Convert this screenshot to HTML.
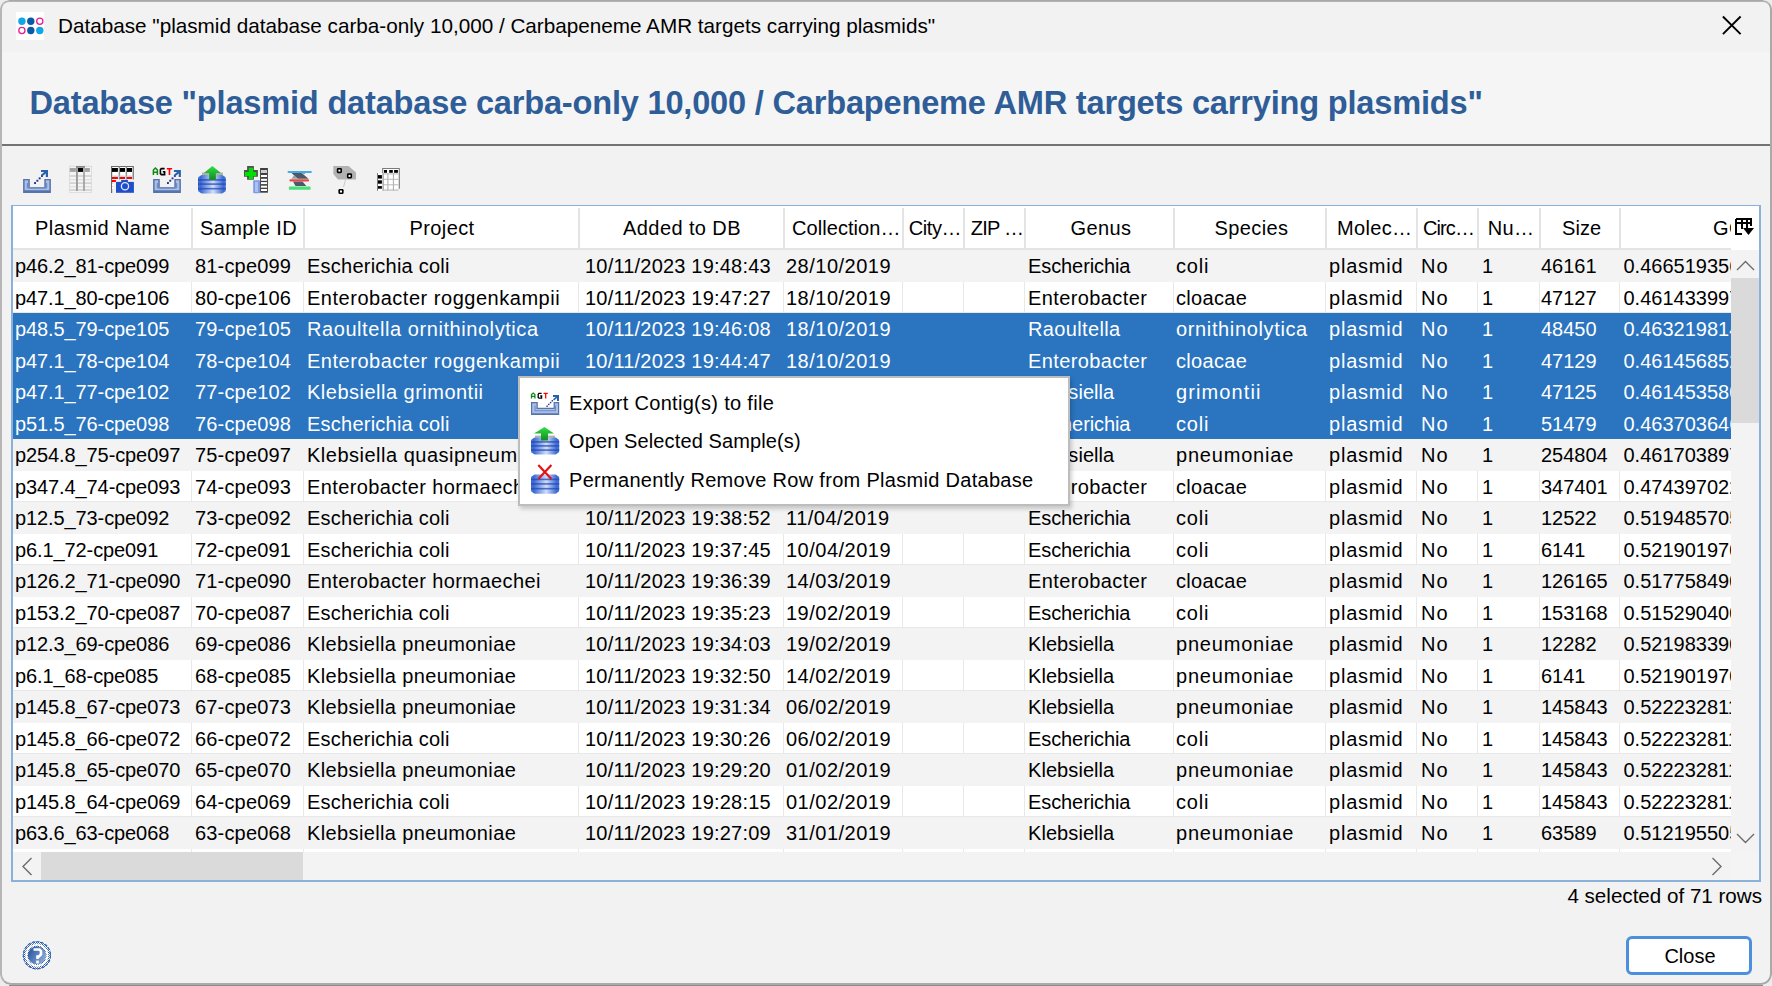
<!DOCTYPE html>
<html><head><meta charset="utf-8">
<style>
*{box-sizing:border-box}
html,body{margin:0;padding:0}
body{width:1772px;height:986px;overflow:hidden;position:relative;background:#ececec;font-family:"Liberation Sans",sans-serif;color:#000}
.win{position:absolute;left:0;top:0;width:1772px;height:985px;background:#f2f2f2;border-radius:9px 9px 11px 11px;overflow:hidden}
.frame{position:absolute;left:0;top:0;width:1772px;height:985px;border:2px solid #aaaaaa;border-left-color:#b6b6b6;border-top-color:#b4b4b4;border-top-width:2px;border-radius:9px 9px 11px 11px}
.strip{position:absolute;background:#a8a8a8}
.abs{position:absolute}
.titlebar{position:absolute;left:0;top:0;width:100%;height:52px;background:#f2f2f2}
.title{position:absolute;left:58px;top:13.5px;font-size:20.7px;line-height:24px;white-space:pre}
.heading{position:absolute;left:0;top:52px;width:100%;height:92px;background:#f5f5f5}
.heading .t{position:absolute;left:29.5px;top:32.6px;font-size:32.6px;letter-spacing:-0.2px;font-weight:bold;color:#2e5d98;line-height:36px;white-space:pre}
.sepline{position:absolute;left:0;top:144px;width:100%;height:2px;background:#737373}
.tbl{position:absolute;left:11px;top:205px;width:1750px;height:677px;border:2px solid #89b1d9;border-top-width:1px;border-bottom-width:2px;background:#fff;overflow:hidden}
.hdr{position:absolute;left:0;top:0;width:1718px;height:43px;background:#fff;overflow:hidden}
.hdr .hc{position:absolute;top:10px;height:24px;line-height:24px;font-size:20px;letter-spacing:0.4px;text-align:center;white-space:nowrap;overflow:visible}
.hdr .hs{position:absolute;top:2px;width:2px;height:40px;background:#e4e4e4}
.hline{position:absolute;left:0;top:42px;width:1718px;height:2px;background:#e4e4e4}
.body{position:absolute;left:0;top:44px;width:1718px;height:602px;overflow:hidden}
.row{position:absolute;left:0;width:1718px}
.row.g{background:#f3f3f3}
.row.w{background:#fff;border-bottom:1px solid #e8e8e8}
.row.sel{background:#2a74c0;color:#fff}
.row i{position:absolute;top:0;width:1px;height:100%;background:#e8e8e8}
.row span{position:absolute;top:4px;height:24px;line-height:24px;font-size:20px;white-space:nowrap;overflow:hidden}
.vsb{position:absolute;left:1718px;top:44px;width:28px;height:602px;background:#f3f3f3}
.hsb{position:absolute;left:0;top:646px;width:1718px;height:28px;background:#f3f3f3}
.corner{position:absolute;left:1718px;top:646px;width:28px;height:28px;background:#f4f4f4}
.status{position:absolute;right:10px;top:883.8px;font-size:20.6px;line-height:24px;white-space:pre}
.btn{position:absolute;left:1626px;top:936px;width:126px;height:39px;border:3px solid #4a90dd;border-radius:6px;background:#fff;font-size:20px;text-align:center;line-height:35px;padding-left:2px}
.menu{position:absolute;left:518px;top:376px;width:552px;height:130px;background:#fff;border:2px solid #bdbdbd;box-shadow:2px 3px 4px rgba(0,0,0,.18)}
.menu .it{position:absolute;left:49px;font-size:20px;letter-spacing:0.3px;line-height:24px;white-space:pre}
</style></head>
<body>
<div class="win">
  <div class="titlebar">
    <svg class="abs" style="left:16px;top:12px" width="28" height="28" viewBox="0 0 28 28">
      <rect x="0" y="0" width="28" height="28" fill="#fff"/>
      <circle cx="5.9" cy="9.3" r="3.7" fill="#12a6e6"/>
      <circle cx="14.8" cy="9.3" r="3.7" fill="#0a5aa6"/>
      <circle cx="23.8" cy="9.3" r="3.1" fill="none" stroke="#ea1e8c" stroke-width="1.3"/>
      <circle cx="5.9" cy="18.5" r="3.1" fill="none" stroke="#ea1e8c" stroke-width="1.3"/>
      <circle cx="14.8" cy="18.5" r="3.7" fill="#0a5aa6"/>
      <circle cx="23.8" cy="18.5" r="3.7" fill="#12a6e6"/>
    </svg>
    <div class="title">Database "plasmid database carba-only 10,000 / Carbapeneme AMR targets carrying plasmids"</div>
    <svg class="abs" style="left:1719px;top:12.8px" width="25" height="24" viewBox="0 0 25 24">
      <path d="M3.9 3.5 L21.6 21.2 M21.6 3.5 L3.9 21.2" stroke="#000" stroke-width="1.9" fill="none"/>
    </svg>
  </div>
  <div class="heading"><div class="t">Database "plasmid database carba-only 10,000 / Carbapeneme AMR targets carrying plasmids"</div></div>
  <div class="sepline"></div>

  <div id="toolbar">
  <svg class="abs" style="left:20px;top:162px" width="36" height="36"><path d="M3.1 17 H9.8 V25 H24.3 V17 H30.900000000000002 V30.9 H3.1 Z" fill="#5673ad"/>
<path d="M4.6 18.3 H8.3 V26.4 H25.8 V18.3 H29.400000000000002 V28.2 H4.6 Z" fill="#a9bfe6"/>
<path d="M7.4 21 V25.6 H26.6 V21" fill="none" stroke="#6f8cc6" stroke-width="1.2"/><rect x="14.1" y="20.1" width="1.9" height="1.9" fill="#1d2f90"/><rect x="16.4" y="17.8" width="1.9" height="1.9" fill="#1d2f90"/><rect x="18.7" y="15.4" width="1.9" height="1.9" fill="#1d2f90"/><rect x="21.0" y="13.0" width="1.9" height="1.9" fill="#1d2f90"/><path d="M21 8 H28 V15 L25.8 15 V11.5 L22 14.5 L20.8 13 L24.2 10 H21 Z" fill="#2a62a8"/></svg>
<svg class="abs" style="left:62px;top:162px" width="36" height="36"><rect x="7.1" y="3.8" width="22.8" height="27" fill="#d4d4d4"/><rect x="7.8" y="4.6" width="21.4" height="25.6" fill="#f4f4f4"/><rect x="7.8" y="6" width="6.1" height="3.9" fill="#a3a3a3"/><rect x="16" y="6" width="5" height="3.9" fill="#000"/><rect x="23" y="6" width="4.9" height="3.9" fill="#a3a3a3"/><rect x="7.8" y="13.2" width="21.4" height="1.6" fill="#d0d0d0"/><rect x="7.8" y="20.3" width="21.4" height="1.6" fill="#d0d0d0"/><rect x="7.8" y="27.2" width="21.4" height="1.6" fill="#d0d0d0"/><rect x="7.8" y="17.1" width="21.4" height="1.2" fill="#dedede"/><rect x="7.8" y="24.1" width="21.4" height="1.2" fill="#dedede"/><rect x="14" y="4" width="1.9" height="25" fill="#9c9c9c"/><rect x="21.2" y="4" width="1.6" height="25" fill="#9c9c9c"/><rect x="14" y="4" width="8.8" height="1.8" fill="#8a8a8a"/></svg>
<svg class="abs" style="left:106px;top:162px" width="36" height="36"><rect x="5.1" y="4" width="22.6" height="13.5" fill="#fff"/><path d="M5.6 31 V4.5 H27.2 V17.5" fill="none" stroke="#6a6a6a" stroke-width="1.2"/><rect x="12.7" y="4.5" width="1.4" height="13" fill="#8a8a8a"/><rect x="19.7" y="4.5" width="1.4" height="13" fill="#8a8a8a"/><rect x="6" y="6" width="5.9" height="3.9" fill="#000"/><rect x="14" y="6" width="5" height="3.9" fill="#000"/><rect x="21" y="6" width="5" height="3.9" fill="#000"/><rect x="6" y="13.6" width="21" height="1.2" fill="#b8d0d0"/><rect x="6" y="15" width="5.9" height="2" fill="#f00"/><rect x="14" y="15" width="5" height="2" fill="#f00"/><rect x="21" y="15" width="5" height="2" fill="#f00"/><rect x="6" y="18" width="3.9" height="2" fill="#f00"/><rect x="6" y="22" width="2" height="2" fill="#fff"/><rect x="6" y="25" width="2" height="2" fill="#fff"/><rect x="10" y="19.9" width="17.9" height="10.9" fill="#1f4fc8"/><rect x="15.2" y="17.9" width="6.7" height="2.2" fill="#1f4fc8"/><circle cx="19" cy="24.3" r="3.6" fill="none" stroke="#dfe6f8" stroke-width="1.3"/></svg>
<svg class="abs" style="left:148px;top:162px" width="36" height="36"><path d="M5.1 17 H11.8 V25 H26.299999999999997 V17 H32.9 V30.9 H5.1 Z" fill="#5673ad"/>
<path d="M6.6 18.3 H10.3 V26.4 H27.799999999999997 V18.3 H31.4 V28.2 H6.6 Z" fill="#a9bfe6"/>
<path d="M9.399999999999999 21 V25.6 H28.6 V21" fill="none" stroke="#6f8cc6" stroke-width="1.2"/><rect x="19.0" y="20.1" width="1.9" height="1.9" fill="#1d2f90"/><rect x="21.3" y="17.8" width="1.9" height="1.9" fill="#1d2f90"/><rect x="23.6" y="15.4" width="1.9" height="1.9" fill="#1d2f90"/><rect x="25.9" y="13.0" width="1.9" height="1.9" fill="#1d2f90"/><path d="M25.9 8 H32.9 V15 L30.7 15 V11.5 L26.9 14.5 L25.7 13 L29.099999999999998 10 H25.9 Z" fill="#2a62a8"/><path d="M5.4 13 V8 L7.4 6 L9.4 8 V13 M5.4 10.2 H9.4" fill="none" stroke="#0e8a0e" stroke-width="1.5"/><path d="M16.6 6.6 H13.3 L12.4 7.6 V11.6 L13.3 12.6 H16.6 V9.8 H14.8" fill="none" stroke="#000" stroke-width="1.6"/><path d="M18.8 6.7 H24.1 M21.45 6.7 V13" fill="none" stroke="#f00" stroke-width="1.6"/></svg>
<svg class="abs" style="left:194px;top:162px" width="36" height="36"><defs>
<linearGradient id="dbg" x1="0" y1="0" x2="1" y2="0"><stop offset="0" stop-color="#3564d0"/><stop offset="0.55" stop-color="#d0def8"/><stop offset="1" stop-color="#3564d0"/></linearGradient>
<linearGradient id="grn" x1="0" y1="0" x2="0" y2="1"><stop offset="0" stop-color="#2fe045"/><stop offset="1" stop-color="#138a22"/></linearGradient>
</defs><rect x="8" y="10.6" width="21" height="2.4" fill="#a7b7a0"/><rect x="4" y="14.1" width="27.8" height="16.3" rx="3" fill="url(#dbg)"/><rect x="6" y="13.1" width="23.8" height="18.3" rx="2" fill="url(#dbg)"/><rect x="4" y="17.1" width="27.8" height="1.6" fill="#2448b8" opacity="0.75"/><rect x="4" y="21.3" width="27.8" height="1.6" fill="#2448b8" opacity="0.75"/><rect x="4" y="25.9" width="27.8" height="1.6" fill="#2448b8" opacity="0.75"/><path d="M18.3 4 L27 11 H21.9 V17.7 H15.2 V11 H9.9 Z" fill="url(#grn)"/></svg>
<svg class="abs" style="left:238px;top:162px" width="36" height="36"><rect x="15.2" y="18.3" width="7" height="13" rx="1" fill="#7d9ce6"/><rect x="17" y="20" width="3" height="10" fill="#b9cbf4" opacity=".8"/><path d="M9.1 4 H15.9 V8 H19.9 V14.8 H15.9 V17.7 H9.1 V14.8 H6 V8 H9.1 Z" fill="#505050"/><path d="M10.8 5.8 H15.2 V9.9 H18.3 V14 H15.2 V17.2 H10.8 V14 H6.9 V9.9 H10.8 Z" fill="#00e000"/><rect x="22.1" y="6" width="7.8" height="24.7" fill="#3f3f3f"/><rect x="23" y="8" width="6" height="3" fill="#cdcdcd"/><rect x="23" y="13" width="6" height="2" fill="#fff"/><rect x="23" y="16.8" width="6" height="2" fill="#fff"/><rect x="23" y="20.1" width="6" height="2" fill="#fff"/><rect x="23" y="23.7" width="6" height="2" fill="#fff"/><rect x="23" y="27" width="6" height="2" fill="#fff"/></svg>
<svg class="abs" style="left:282px;top:162px" width="36" height="36"><path d="M9.5 11 H19.7 L26.5 16.8 H15.7 Z" fill="#4b5a66"/><path d="M19.7 11 H23.8 L22 12.5 Z M9.5 16.8 L12 13.5 L15.7 16.8 Z" fill="#8ea2ad"/><path d="M11 19.6 H20.5 L24.3 24 H13.5 Z" fill="#4b5a66"/><rect x="5.5" y="9.1" width="24.4" height="2" rx="1" fill="#45aae8"/><rect x="7.5" y="17.2" width="19.5" height="2.3" rx="0.8" fill="#e84848"/><rect x="6.9" y="24.5" width="21.6" height="3.2" rx="0.5" fill="#4ade7a"/></svg>
<svg class="abs" style="left:326px;top:162px" width="36" height="36"><path d="M7.3 4 H22.6 L30 10.5 V17.6 H12 L7.3 12 Z" fill="#b2b2b2"/><path d="M19.5 18 L17.5 25" stroke="#c8c8c8" stroke-width="1"/><rect x="10.8" y="6.0" width="5.2" height="5.2" rx="1.4" fill="#000"/><rect x="12.4" y="7.6" width="2" height="2" fill="#fff"/><rect x="20.9" y="11.3" width="5.2" height="5.2" rx="1.4" fill="#000"/><rect x="22.5" y="12.9" width="2" height="2" fill="#fff"/><rect x="12.4" y="26.9" width="5.2" height="5.2" rx="1.4" fill="#000"/><rect x="14" y="28.5" width="2" height="2" fill="#fff"/></svg>
<svg class="abs" style="left:370px;top:162px" width="36" height="36"><rect x="12.2" y="6" width="17.6" height="20.7" fill="#fff"/><path d="M12.7 11 V6.5 H29.3 V26.7" fill="none" stroke="#7a7a7a" stroke-width="1.1"/><rect x="14" y="8" width="3" height="2.8" fill="#000"/><rect x="19.2" y="8" width="3.6" height="2.8" fill="#000"/><rect x="24.1" y="8" width="3.8" height="2.8" fill="#000"/><rect x="7.1" y="11" width="6.6" height="17.8" fill="#fff"/><path d="M7.5 11 V28.8" stroke="#6a6a6a" stroke-width="0.9"/><path d="M13.1 11 V28.8" stroke="#8a8a8a" stroke-width="1.1"/><rect x="8" y="13.1" width="3.9" height="3.5" fill="#000"/><rect x="8" y="18.3" width="3.9" height="3.4" fill="#000"/><rect x="8" y="24.1" width="3.9" height="2.6" fill="#000"/><rect x="17.4" y="11" width="1" height="17.5" fill="#a8a8a8"/><rect x="22.9" y="11" width="1" height="17.5" fill="#a8a8a8"/><rect x="13" y="11.4" width="15.5" height="1" fill="#b8b8b8"/><rect x="13" y="16.8" width="15.5" height="1" fill="#b8b8b8"/><rect x="13" y="22.3" width="15.5" height="1" fill="#b8b8b8"/><rect x="13" y="27.6" width="15.5" height="1" fill="#b8b8b8"/></svg>
  </div>

  <div class="tbl">
    <div class="hdr">
<div class="hc" style="left:0px;width:179px">Plasmid Name</div>
<div class="hc" style="left:180px;width:111px">Sample ID</div>
<div class="hc" style="left:292px;width:274px">Project</div>
<div class="hc" style="left:567px;width:204px">Added to DB</div>
<div class="hc" style="left:774.25px;width:118px;letter-spacing:0.05px">Collection…</div>
<div class="hc" style="left:892px;width:60px;letter-spacing:-0.4px">City…</div>
<div class="hc" style="left:954px;width:60px;letter-spacing:-0.8px">ZIP …</div>
<div class="hc" style="left:1014px;width:148px">Genus</div>
<div class="hc" style="left:1163px;width:151px">Species</div>
<div class="hc" style="left:1316.7px;width:90px;letter-spacing:0.3px">Molec…</div>
<div class="hc" style="left:1405.5px;width:60px;letter-spacing:-0.9px">Circ…</div>
<div class="hc" style="left:1467.6px;width:61px;letter-spacing:0.3px">Nu…</div>
<div class="hc" style="left:1529.1px;width:79px;letter-spacing:0.1px">Size</div>
<div class="hc" style="left:1613px;width:205px">GC</div>
<div class="hs" style="left:178px"></div>
<div class="hs" style="left:290px"></div>
<div class="hs" style="left:565px"></div>
<div class="hs" style="left:770px"></div>
<div class="hs" style="left:889px"></div>
<div class="hs" style="left:950px"></div>
<div class="hs" style="left:1011px"></div>
<div class="hs" style="left:1160px"></div>
<div class="hs" style="left:1312px"></div>
<div class="hs" style="left:1403px"></div>
<div class="hs" style="left:1464px"></div>
<div class="hs" style="left:1526px"></div>
<div class="hs" style="left:1606px"></div>
    </div>
    <div class="hline"></div>
    <svg class="abs" style="left:1722px;top:12px" width="19" height="18" viewBox="0 0 19 18">
      <path d="M1 1 H16 V8 M1 1 V16 H7 M1 5 H16 M7 1 V11 M12 1 V11" stroke="#000" stroke-width="2" fill="none"/>
      <path d="M8 10 H19 L13.5 17 Z" fill="#000"/>
    </svg>
    <div class="body">
<div class="row g" style="top:0px;height:32px">
<span style="left:2px;width:177px;letter-spacing:-0.1px">p46.2_81-cpe099</span>
<span style="left:182px;width:109px;letter-spacing:0.17px">81-cpe099</span>
<span style="left:294px;width:272px;letter-spacing:0.23px">Escherichia coli</span>
<span style="left:572px;width:199px;letter-spacing:0.2px">10/11/2023 19:48:43</span>
<span style="left:773px;width:117px;letter-spacing:0.5px">28/10/2019</span>
<span style="left:1015px;width:146px;letter-spacing:-0.09px">Escherichia</span>
<span style="left:1163px;width:150px;letter-spacing:0.83px">coli</span>
<span style="left:1316px;width:88px;letter-spacing:0.78px">plasmid</span>
<span style="left:1408px;width:57px;letter-spacing:1.0px">No</span>
<span style="left:1469px;width:58px">1</span>
<span style="left:1528px;width:79px">46161</span>
<span style="left:1610.5px;width:276.5px">0.466519356</span>
</div>
<div class="row w" style="top:32px;height:31px">
<i style="left:178px"></i>
<i style="left:290px"></i>
<i style="left:565px"></i>
<i style="left:770px"></i>
<i style="left:889px"></i>
<i style="left:950px"></i>
<i style="left:1011px"></i>
<i style="left:1160px"></i>
<i style="left:1312px"></i>
<i style="left:1403px"></i>
<i style="left:1464px"></i>
<i style="left:1526px"></i>
<i style="left:1606px"></i>
<span style="left:2px;width:177px;letter-spacing:-0.1px">p47.1_80-cpe106</span>
<span style="left:182px;width:109px;letter-spacing:0.17px">80-cpe106</span>
<span style="left:294px;width:272px;letter-spacing:0.52px">Enterobacter roggenkampii</span>
<span style="left:572px;width:199px;letter-spacing:0.2px">10/11/2023 19:47:27</span>
<span style="left:773px;width:117px;letter-spacing:0.5px">18/10/2019</span>
<span style="left:1015px;width:146px;letter-spacing:0.39px">Enterobacter</span>
<span style="left:1163px;width:150px;letter-spacing:0.32px">cloacae</span>
<span style="left:1316px;width:88px;letter-spacing:0.78px">plasmid</span>
<span style="left:1408px;width:57px;letter-spacing:1.0px">No</span>
<span style="left:1469px;width:58px">1</span>
<span style="left:1528px;width:79px">47127</span>
<span style="left:1610.5px;width:276.5px">0.461433997</span>
</div>
<div class="row sel" style="top:63px;height:32px">
<span style="left:2px;width:177px;letter-spacing:-0.1px">p48.5_79-cpe105</span>
<span style="left:182px;width:109px;letter-spacing:0.17px">79-cpe105</span>
<span style="left:294px;width:272px;letter-spacing:0.57px">Raoultella ornithinolytica</span>
<span style="left:572px;width:199px;letter-spacing:0.2px">10/11/2023 19:46:08</span>
<span style="left:773px;width:117px;letter-spacing:0.5px">18/10/2019</span>
<span style="left:1015px;width:146px;letter-spacing:0.36px">Raoultella</span>
<span style="left:1163px;width:150px;letter-spacing:0.64px">ornithinolytica</span>
<span style="left:1316px;width:88px;letter-spacing:0.78px">plasmid</span>
<span style="left:1408px;width:57px;letter-spacing:1.0px">No</span>
<span style="left:1469px;width:58px">1</span>
<span style="left:1528px;width:79px">48450</span>
<span style="left:1610.5px;width:276.5px">0.463219814</span>
</div>
<div class="row sel" style="top:95px;height:31px">
<span style="left:2px;width:177px;letter-spacing:-0.1px">p47.1_78-cpe104</span>
<span style="left:182px;width:109px;letter-spacing:0.17px">78-cpe104</span>
<span style="left:294px;width:272px;letter-spacing:0.52px">Enterobacter roggenkampii</span>
<span style="left:572px;width:199px;letter-spacing:0.2px">10/11/2023 19:44:47</span>
<span style="left:773px;width:117px;letter-spacing:0.5px">18/10/2019</span>
<span style="left:1015px;width:146px;letter-spacing:0.39px">Enterobacter</span>
<span style="left:1163px;width:150px;letter-spacing:0.32px">cloacae</span>
<span style="left:1316px;width:88px;letter-spacing:0.78px">plasmid</span>
<span style="left:1408px;width:57px;letter-spacing:1.0px">No</span>
<span style="left:1469px;width:58px">1</span>
<span style="left:1528px;width:79px">47129</span>
<span style="left:1610.5px;width:276.5px">0.461456852</span>
</div>
<div class="row sel" style="top:126px;height:32px">
<span style="left:2px;width:177px;letter-spacing:-0.1px">p47.1_77-cpe102</span>
<span style="left:182px;width:109px;letter-spacing:0.17px">77-cpe102</span>
<span style="left:294px;width:272px;letter-spacing:0.49px">Klebsiella grimontii</span>
<span style="left:572px;width:199px;letter-spacing:0.2px">10/11/2023 19:43:27</span>
<span style="left:773px;width:117px;letter-spacing:0.5px">18/10/2019</span>
<span style="left:1015px;width:146px;letter-spacing:0.07px">Klebsiella</span>
<span style="left:1163px;width:150px;letter-spacing:1.1px">grimontii</span>
<span style="left:1316px;width:88px;letter-spacing:0.78px">plasmid</span>
<span style="left:1408px;width:57px;letter-spacing:1.0px">No</span>
<span style="left:1469px;width:58px">1</span>
<span style="left:1528px;width:79px">47125</span>
<span style="left:1610.5px;width:276.5px">0.461453580</span>
</div>
<div class="row sel" style="top:158px;height:31px">
<span style="left:2px;width:177px;letter-spacing:-0.1px">p51.5_76-cpe098</span>
<span style="left:182px;width:109px;letter-spacing:0.17px">76-cpe098</span>
<span style="left:294px;width:272px;letter-spacing:0.23px">Escherichia coli</span>
<span style="left:572px;width:199px;letter-spacing:0.2px">10/11/2023 19:42:05</span>
<span style="left:773px;width:117px;letter-spacing:0.5px">17/10/2019</span>
<span style="left:1015px;width:146px;letter-spacing:-0.09px">Escherichia</span>
<span style="left:1163px;width:150px;letter-spacing:0.83px">coli</span>
<span style="left:1316px;width:88px;letter-spacing:0.78px">plasmid</span>
<span style="left:1408px;width:57px;letter-spacing:1.0px">No</span>
<span style="left:1469px;width:58px">1</span>
<span style="left:1528px;width:79px">51479</span>
<span style="left:1610.5px;width:276.5px">0.463703646</span>
</div>
<div class="row g" style="top:189px;height:32px">
<span style="left:2px;width:177px;letter-spacing:-0.1px">p254.8_75-cpe097</span>
<span style="left:182px;width:109px;letter-spacing:0.17px">75-cpe097</span>
<span style="left:294px;width:272px;letter-spacing:0.5px">Klebsiella quasipneumoniae</span>
<span style="left:572px;width:199px;letter-spacing:0.2px">10/11/2023 19:40:57</span>
<span style="left:773px;width:117px;letter-spacing:0.5px">16/10/2019</span>
<span style="left:1015px;width:146px;letter-spacing:0.07px">Klebsiella</span>
<span style="left:1163px;width:150px;letter-spacing:0.8px">pneumoniae</span>
<span style="left:1316px;width:88px;letter-spacing:0.78px">plasmid</span>
<span style="left:1408px;width:57px;letter-spacing:1.0px">No</span>
<span style="left:1469px;width:58px">1</span>
<span style="left:1528px;width:79px">254804</span>
<span style="left:1610.5px;width:276.5px">0.461703897</span>
</div>
<div class="row w" style="top:221px;height:31px">
<i style="left:178px"></i>
<i style="left:290px"></i>
<i style="left:565px"></i>
<i style="left:770px"></i>
<i style="left:889px"></i>
<i style="left:950px"></i>
<i style="left:1011px"></i>
<i style="left:1160px"></i>
<i style="left:1312px"></i>
<i style="left:1403px"></i>
<i style="left:1464px"></i>
<i style="left:1526px"></i>
<i style="left:1606px"></i>
<span style="left:2px;width:177px;letter-spacing:-0.1px">p347.4_74-cpe093</span>
<span style="left:182px;width:109px;letter-spacing:0.17px">74-cpe093</span>
<span style="left:294px;width:272px;letter-spacing:0.4px">Enterobacter hormaechei</span>
<span style="left:572px;width:199px;letter-spacing:0.2px">10/11/2023 19:39:58</span>
<span style="left:773px;width:117px;letter-spacing:0.5px">12/04/2019</span>
<span style="left:1015px;width:146px;letter-spacing:0.39px">Enterobacter</span>
<span style="left:1163px;width:150px;letter-spacing:0.32px">cloacae</span>
<span style="left:1316px;width:88px;letter-spacing:0.78px">plasmid</span>
<span style="left:1408px;width:57px;letter-spacing:1.0px">No</span>
<span style="left:1469px;width:58px">1</span>
<span style="left:1528px;width:79px">347401</span>
<span style="left:1610.5px;width:276.5px">0.474397022</span>
</div>
<div class="row g" style="top:252px;height:32px">
<span style="left:2px;width:177px;letter-spacing:-0.1px">p12.5_73-cpe092</span>
<span style="left:182px;width:109px;letter-spacing:0.17px">73-cpe092</span>
<span style="left:294px;width:272px;letter-spacing:0.23px">Escherichia coli</span>
<span style="left:572px;width:199px;letter-spacing:0.2px">10/11/2023 19:38:52</span>
<span style="left:773px;width:117px;letter-spacing:0.5px">11/04/2019</span>
<span style="left:1015px;width:146px;letter-spacing:-0.09px">Escherichia</span>
<span style="left:1163px;width:150px;letter-spacing:0.83px">coli</span>
<span style="left:1316px;width:88px;letter-spacing:0.78px">plasmid</span>
<span style="left:1408px;width:57px;letter-spacing:1.0px">No</span>
<span style="left:1469px;width:58px">1</span>
<span style="left:1528px;width:79px">12522</span>
<span style="left:1610.5px;width:276.5px">0.519485705</span>
</div>
<div class="row w" style="top:284px;height:31px">
<i style="left:178px"></i>
<i style="left:290px"></i>
<i style="left:565px"></i>
<i style="left:770px"></i>
<i style="left:889px"></i>
<i style="left:950px"></i>
<i style="left:1011px"></i>
<i style="left:1160px"></i>
<i style="left:1312px"></i>
<i style="left:1403px"></i>
<i style="left:1464px"></i>
<i style="left:1526px"></i>
<i style="left:1606px"></i>
<span style="left:2px;width:177px;letter-spacing:-0.1px">p6.1_72-cpe091</span>
<span style="left:182px;width:109px;letter-spacing:0.17px">72-cpe091</span>
<span style="left:294px;width:272px;letter-spacing:0.23px">Escherichia coli</span>
<span style="left:572px;width:199px;letter-spacing:0.2px">10/11/2023 19:37:45</span>
<span style="left:773px;width:117px;letter-spacing:0.5px">10/04/2019</span>
<span style="left:1015px;width:146px;letter-spacing:-0.09px">Escherichia</span>
<span style="left:1163px;width:150px;letter-spacing:0.83px">coli</span>
<span style="left:1316px;width:88px;letter-spacing:0.78px">plasmid</span>
<span style="left:1408px;width:57px;letter-spacing:1.0px">No</span>
<span style="left:1469px;width:58px">1</span>
<span style="left:1528px;width:79px">6141</span>
<span style="left:1610.5px;width:276.5px">0.521901970</span>
</div>
<div class="row g" style="top:315px;height:32px">
<span style="left:2px;width:177px;letter-spacing:-0.1px">p126.2_71-cpe090</span>
<span style="left:182px;width:109px;letter-spacing:0.17px">71-cpe090</span>
<span style="left:294px;width:272px;letter-spacing:0.4px">Enterobacter hormaechei</span>
<span style="left:572px;width:199px;letter-spacing:0.2px">10/11/2023 19:36:39</span>
<span style="left:773px;width:117px;letter-spacing:0.5px">14/03/2019</span>
<span style="left:1015px;width:146px;letter-spacing:0.39px">Enterobacter</span>
<span style="left:1163px;width:150px;letter-spacing:0.32px">cloacae</span>
<span style="left:1316px;width:88px;letter-spacing:0.78px">plasmid</span>
<span style="left:1408px;width:57px;letter-spacing:1.0px">No</span>
<span style="left:1469px;width:58px">1</span>
<span style="left:1528px;width:79px">126165</span>
<span style="left:1610.5px;width:276.5px">0.517758490</span>
</div>
<div class="row w" style="top:347px;height:31px">
<i style="left:178px"></i>
<i style="left:290px"></i>
<i style="left:565px"></i>
<i style="left:770px"></i>
<i style="left:889px"></i>
<i style="left:950px"></i>
<i style="left:1011px"></i>
<i style="left:1160px"></i>
<i style="left:1312px"></i>
<i style="left:1403px"></i>
<i style="left:1464px"></i>
<i style="left:1526px"></i>
<i style="left:1606px"></i>
<span style="left:2px;width:177px;letter-spacing:-0.1px">p153.2_70-cpe087</span>
<span style="left:182px;width:109px;letter-spacing:0.17px">70-cpe087</span>
<span style="left:294px;width:272px;letter-spacing:0.23px">Escherichia coli</span>
<span style="left:572px;width:199px;letter-spacing:0.2px">10/11/2023 19:35:23</span>
<span style="left:773px;width:117px;letter-spacing:0.5px">19/02/2019</span>
<span style="left:1015px;width:146px;letter-spacing:-0.09px">Escherichia</span>
<span style="left:1163px;width:150px;letter-spacing:0.83px">coli</span>
<span style="left:1316px;width:88px;letter-spacing:0.78px">plasmid</span>
<span style="left:1408px;width:57px;letter-spacing:1.0px">No</span>
<span style="left:1469px;width:58px">1</span>
<span style="left:1528px;width:79px">153168</span>
<span style="left:1610.5px;width:276.5px">0.515290400</span>
</div>
<div class="row g" style="top:378px;height:32px">
<span style="left:2px;width:177px;letter-spacing:-0.1px">p12.3_69-cpe086</span>
<span style="left:182px;width:109px;letter-spacing:0.17px">69-cpe086</span>
<span style="left:294px;width:272px;letter-spacing:0.375px">Klebsiella pneumoniae</span>
<span style="left:572px;width:199px;letter-spacing:0.2px">10/11/2023 19:34:03</span>
<span style="left:773px;width:117px;letter-spacing:0.5px">19/02/2019</span>
<span style="left:1015px;width:146px;letter-spacing:0.07px">Klebsiella</span>
<span style="left:1163px;width:150px;letter-spacing:0.8px">pneumoniae</span>
<span style="left:1316px;width:88px;letter-spacing:0.78px">plasmid</span>
<span style="left:1408px;width:57px;letter-spacing:1.0px">No</span>
<span style="left:1469px;width:58px">1</span>
<span style="left:1528px;width:79px">12282</span>
<span style="left:1610.5px;width:276.5px">0.521983390</span>
</div>
<div class="row w" style="top:410px;height:31px">
<i style="left:178px"></i>
<i style="left:290px"></i>
<i style="left:565px"></i>
<i style="left:770px"></i>
<i style="left:889px"></i>
<i style="left:950px"></i>
<i style="left:1011px"></i>
<i style="left:1160px"></i>
<i style="left:1312px"></i>
<i style="left:1403px"></i>
<i style="left:1464px"></i>
<i style="left:1526px"></i>
<i style="left:1606px"></i>
<span style="left:2px;width:177px;letter-spacing:-0.1px">p6.1_68-cpe085</span>
<span style="left:182px;width:109px;letter-spacing:0.17px">68-cpe085</span>
<span style="left:294px;width:272px;letter-spacing:0.375px">Klebsiella pneumoniae</span>
<span style="left:572px;width:199px;letter-spacing:0.2px">10/11/2023 19:32:50</span>
<span style="left:773px;width:117px;letter-spacing:0.5px">14/02/2019</span>
<span style="left:1015px;width:146px;letter-spacing:0.07px">Klebsiella</span>
<span style="left:1163px;width:150px;letter-spacing:0.8px">pneumoniae</span>
<span style="left:1316px;width:88px;letter-spacing:0.78px">plasmid</span>
<span style="left:1408px;width:57px;letter-spacing:1.0px">No</span>
<span style="left:1469px;width:58px">1</span>
<span style="left:1528px;width:79px">6141</span>
<span style="left:1610.5px;width:276.5px">0.521901970</span>
</div>
<div class="row g" style="top:441px;height:32px">
<span style="left:2px;width:177px;letter-spacing:-0.1px">p145.8_67-cpe073</span>
<span style="left:182px;width:109px;letter-spacing:0.17px">67-cpe073</span>
<span style="left:294px;width:272px;letter-spacing:0.375px">Klebsiella pneumoniae</span>
<span style="left:572px;width:199px;letter-spacing:0.2px">10/11/2023 19:31:34</span>
<span style="left:773px;width:117px;letter-spacing:0.5px">06/02/2019</span>
<span style="left:1015px;width:146px;letter-spacing:0.07px">Klebsiella</span>
<span style="left:1163px;width:150px;letter-spacing:0.8px">pneumoniae</span>
<span style="left:1316px;width:88px;letter-spacing:0.78px">plasmid</span>
<span style="left:1408px;width:57px;letter-spacing:1.0px">No</span>
<span style="left:1469px;width:58px">1</span>
<span style="left:1528px;width:79px">145843</span>
<span style="left:1610.5px;width:276.5px">0.522232811</span>
</div>
<div class="row w" style="top:473px;height:31px">
<i style="left:178px"></i>
<i style="left:290px"></i>
<i style="left:565px"></i>
<i style="left:770px"></i>
<i style="left:889px"></i>
<i style="left:950px"></i>
<i style="left:1011px"></i>
<i style="left:1160px"></i>
<i style="left:1312px"></i>
<i style="left:1403px"></i>
<i style="left:1464px"></i>
<i style="left:1526px"></i>
<i style="left:1606px"></i>
<span style="left:2px;width:177px;letter-spacing:-0.1px">p145.8_66-cpe072</span>
<span style="left:182px;width:109px;letter-spacing:0.17px">66-cpe072</span>
<span style="left:294px;width:272px;letter-spacing:0.23px">Escherichia coli</span>
<span style="left:572px;width:199px;letter-spacing:0.2px">10/11/2023 19:30:26</span>
<span style="left:773px;width:117px;letter-spacing:0.5px">06/02/2019</span>
<span style="left:1015px;width:146px;letter-spacing:-0.09px">Escherichia</span>
<span style="left:1163px;width:150px;letter-spacing:0.83px">coli</span>
<span style="left:1316px;width:88px;letter-spacing:0.78px">plasmid</span>
<span style="left:1408px;width:57px;letter-spacing:1.0px">No</span>
<span style="left:1469px;width:58px">1</span>
<span style="left:1528px;width:79px">145843</span>
<span style="left:1610.5px;width:276.5px">0.522232811</span>
</div>
<div class="row g" style="top:504px;height:32px">
<span style="left:2px;width:177px;letter-spacing:-0.1px">p145.8_65-cpe070</span>
<span style="left:182px;width:109px;letter-spacing:0.17px">65-cpe070</span>
<span style="left:294px;width:272px;letter-spacing:0.375px">Klebsiella pneumoniae</span>
<span style="left:572px;width:199px;letter-spacing:0.2px">10/11/2023 19:29:20</span>
<span style="left:773px;width:117px;letter-spacing:0.5px">01/02/2019</span>
<span style="left:1015px;width:146px;letter-spacing:0.07px">Klebsiella</span>
<span style="left:1163px;width:150px;letter-spacing:0.8px">pneumoniae</span>
<span style="left:1316px;width:88px;letter-spacing:0.78px">plasmid</span>
<span style="left:1408px;width:57px;letter-spacing:1.0px">No</span>
<span style="left:1469px;width:58px">1</span>
<span style="left:1528px;width:79px">145843</span>
<span style="left:1610.5px;width:276.5px">0.522232811</span>
</div>
<div class="row w" style="top:536px;height:31px">
<i style="left:178px"></i>
<i style="left:290px"></i>
<i style="left:565px"></i>
<i style="left:770px"></i>
<i style="left:889px"></i>
<i style="left:950px"></i>
<i style="left:1011px"></i>
<i style="left:1160px"></i>
<i style="left:1312px"></i>
<i style="left:1403px"></i>
<i style="left:1464px"></i>
<i style="left:1526px"></i>
<i style="left:1606px"></i>
<span style="left:2px;width:177px;letter-spacing:-0.1px">p145.8_64-cpe069</span>
<span style="left:182px;width:109px;letter-spacing:0.17px">64-cpe069</span>
<span style="left:294px;width:272px;letter-spacing:0.23px">Escherichia coli</span>
<span style="left:572px;width:199px;letter-spacing:0.2px">10/11/2023 19:28:15</span>
<span style="left:773px;width:117px;letter-spacing:0.5px">01/02/2019</span>
<span style="left:1015px;width:146px;letter-spacing:-0.09px">Escherichia</span>
<span style="left:1163px;width:150px;letter-spacing:0.83px">coli</span>
<span style="left:1316px;width:88px;letter-spacing:0.78px">plasmid</span>
<span style="left:1408px;width:57px;letter-spacing:1.0px">No</span>
<span style="left:1469px;width:58px">1</span>
<span style="left:1528px;width:79px">145843</span>
<span style="left:1610.5px;width:276.5px">0.522232811</span>
</div>
<div class="row g" style="top:567px;height:32px">
<span style="left:2px;width:177px;letter-spacing:-0.1px">p63.6_63-cpe068</span>
<span style="left:182px;width:109px;letter-spacing:0.17px">63-cpe068</span>
<span style="left:294px;width:272px;letter-spacing:0.375px">Klebsiella pneumoniae</span>
<span style="left:572px;width:199px;letter-spacing:0.2px">10/11/2023 19:27:09</span>
<span style="left:773px;width:117px;letter-spacing:0.5px">31/01/2019</span>
<span style="left:1015px;width:146px;letter-spacing:0.07px">Klebsiella</span>
<span style="left:1163px;width:150px;letter-spacing:0.8px">pneumoniae</span>
<span style="left:1316px;width:88px;letter-spacing:0.78px">plasmid</span>
<span style="left:1408px;width:57px;letter-spacing:1.0px">No</span>
<span style="left:1469px;width:58px">1</span>
<span style="left:1528px;width:79px">63589</span>
<span style="left:1610.5px;width:276.5px">0.512195505</span>
</div>
<div class="row w" style="top:599px;height:31px">
<i style="left:178px"></i>
<i style="left:290px"></i>
<i style="left:565px"></i>
<i style="left:770px"></i>
<i style="left:889px"></i>
<i style="left:950px"></i>
<i style="left:1011px"></i>
<i style="left:1160px"></i>
<i style="left:1312px"></i>
<i style="left:1403px"></i>
<i style="left:1464px"></i>
<i style="left:1526px"></i>
<i style="left:1606px"></i>
<span style="left:2px;width:177px;letter-spacing:-0.1px">p63.6_62-cpe067</span>
<span style="left:182px;width:109px;letter-spacing:0.17px">62-cpe067</span>
<span style="left:294px;width:272px;letter-spacing:0.375px">Klebsiella pneumoniae</span>
<span style="left:572px;width:199px;letter-spacing:0.2px">10/11/2023 19:26:01</span>
<span style="left:773px;width:117px;letter-spacing:0.5px">31/01/2019</span>
<span style="left:1015px;width:146px;letter-spacing:0.07px">Klebsiella</span>
<span style="left:1163px;width:150px;letter-spacing:0.8px">pneumoniae</span>
<span style="left:1316px;width:88px;letter-spacing:0.78px">plasmid</span>
<span style="left:1408px;width:57px;letter-spacing:1.0px">No</span>
<span style="left:1469px;width:58px">1</span>
<span style="left:1528px;width:79px">63589</span>
<span style="left:1610.5px;width:276.5px">0.512195505</span>
</div>
    </div>
    <div class="vsb">
      <svg class="abs" style="left:5px;top:9.5px" width="19" height="11" viewBox="0 0 19 11"><path d="M1 10 L9.5 1.5 L18 10" stroke="#6b6b6b" stroke-width="1.4" fill="none"/></svg>
      <div class="abs" style="left:0;top:28px;width:28px;height:145px;background:#dadada"></div>
      <svg class="abs" style="left:5px;top:583px" width="19" height="11" viewBox="0 0 19 11"><path d="M1 1 L9.5 9.5 L18 1" stroke="#6b6b6b" stroke-width="1.4" fill="none"/></svg>
    </div>
    <div class="hsb">
      <svg class="abs" style="left:7.5px;top:5px" width="12" height="19" viewBox="0 0 12 19"><path d="M10.5 1 L2 9.5 L10.5 18" stroke="#6b6b6b" stroke-width="1.4" fill="none"/></svg>
      <div class="abs" style="left:28px;top:0;width:262px;height:28px;background:#dadada"></div>
      <svg class="abs" style="left:1698px;top:5px" width="12" height="19" viewBox="0 0 12 19"><path d="M1.5 1 L10 9.5 L1.5 18" stroke="#6b6b6b" stroke-width="1.4" fill="none"/></svg>
    </div>
    <div class="corner"></div>
  </div>

  <div class="status">4 selected of 71 rows</div>

  <svg class="abs" style="left:18px;top:936px" width="38" height="38" viewBox="0 0 38 38">
    <defs><linearGradient id="hg" x1="0" y1="0" x2="1" y2="0.6"><stop offset="0" stop-color="#1d4c96"/><stop offset="1" stop-color="#86a6d6"/></linearGradient>
    <pattern id="hd" width="2" height="2" patternUnits="userSpaceOnUse"><rect width="2" height="2" fill="#fff"/><rect width="1" height="1" fill="#2a5aa6"/><rect x="1" y="1" width="1" height="1" fill="#5d82c0"/></pattern></defs>
    <circle cx="18.9" cy="19.3" r="14.1" fill="url(#hd)"/>
    <circle cx="18.9" cy="19.3" r="13.6" fill="none" stroke="#2f5ea8" stroke-width="1.1" stroke-dasharray="3 1.5"/>
    <circle cx="18.9" cy="19.3" r="10.6" fill="none" stroke="#fff" stroke-width="1.6"/>
    <circle cx="18.9" cy="19.3" r="9" fill="url(#hg)"/>
    <path d="M15.5 13.5 H21.5 L23 15 V18.5 L21 20.5 H19.5 V23" fill="none" stroke="#fff" stroke-width="2.6"/>
    <rect x="18.2" y="24.6" width="2.6" height="2.8" fill="#fff"/>
  </svg>

  <div class="btn">Close</div>

  <div class="menu">
    <div class="it" style="top:13.1px">Export Contig(s) to file</div>
<div class="it" style="top:51.1px;letter-spacing:0.12px">Open Selected Sample(s)</div>
<div class="it" style="top:89.5px">Permanently Remove Row from Plasmid Database</div>
  </div>
  <svg class="abs" style="left:526px;top:386px" width="38" height="32"><path d="M5 16 H11.8 V21.7 H27.6 V16 H33.2 V29 H5 Z" fill="#5673ad"/><path d="M6.2 17.2 H10.5 V23 H28.8 V17.2 H32 V27.2 H6.2 Z" fill="#a9bfe6"/><path d="M9 19.5 V24.8 H29.5 V19.5" fill="none" stroke="#6f8cc6" stroke-width="1.1"/><rect x="20.4" y="19.5" width="1.4" height="1.4" fill="#1d2f90"/><rect x="22.1" y="17.7" width="1.4" height="1.4" fill="#1d2f90"/><rect x="23.9" y="15.9" width="1.4" height="1.4" fill="#1d2f90"/><rect x="25.6" y="14.1" width="1.4" height="1.4" fill="#1d2f90"/><path d="M27 9 H33 V15 L31 15 V12 L28 14.5 L27 13.3 L29.8 11 H27 Z" fill="#2a62a8"/><path d="M5.5 12.5 V8.5 L7.2 7 L8.9 8.5 V12.5 M5.5 10.3 H8.9" fill="none" stroke="#0e8a0e" stroke-width="1.3"/><path d="M15.6 7.4 H12.9 L12.2 8.2 V11.4 L12.9 12.2 H15.6 V10 H14.2" fill="none" stroke="#000" stroke-width="1.3"/><path d="M17.6 7.4 H21.8 M19.7 7.4 V12.5" fill="none" stroke="#f00" stroke-width="1.3"/></svg>
<svg class="abs" style="left:526px;top:422px" width="38" height="36"><defs>
<linearGradient id="dbg2" x1="0" y1="0" x2="1" y2="0"><stop offset="0" stop-color="#3564d0"/><stop offset="0.55" stop-color="#d0def8"/><stop offset="1" stop-color="#3564d0"/></linearGradient>
<linearGradient id="grn2" x1="0" y1="0" x2="0" y2="1"><stop offset="0" stop-color="#2fe045"/><stop offset="1" stop-color="#138a22"/></linearGradient>
</defs><rect x="9" y="13.6" width="20" height="2.2" fill="#a7b7a0"/><rect x="5" y="16.4" width="28.2" height="15" rx="3" fill="url(#dbg2)"/><rect x="7" y="15.4" width="24.2" height="17" rx="2" fill="url(#dbg2)"/><rect x="5" y="19.1" width="28.2" height="1.6" fill="#2448b8" opacity="0.75"/><rect x="5" y="23.1" width="28.2" height="1.6" fill="#2448b8" opacity="0.75"/><rect x="5" y="27.3" width="28.2" height="1.6" fill="#2448b8" opacity="0.75"/><path d="M18.5 5 L28 11.6 H22 V18.5 H15 V11.6 H8 Z" fill="url(#grn2)"/></svg>
<svg class="abs" style="left:526px;top:460px" width="38" height="36"><defs>
<linearGradient id="dbg3" x1="0" y1="0" x2="1" y2="0"><stop offset="0" stop-color="#3564d0"/><stop offset="0.55" stop-color="#d0def8"/><stop offset="1" stop-color="#3564d0"/></linearGradient>
<linearGradient id="grn3" x1="0" y1="0" x2="0" y2="1"><stop offset="0" stop-color="#2fe045"/><stop offset="1" stop-color="#138a22"/></linearGradient>
</defs><rect x="5" y="15.4" width="28.2" height="17.3" rx="3" fill="url(#dbg3)"/><rect x="7" y="14.4" width="24.2" height="19.3" rx="2" fill="url(#dbg3)"/><rect x="5" y="18.6" width="28.2" height="1.6" fill="#2448b8" opacity="0.75"/><rect x="5" y="23.1" width="28.2" height="1.6" fill="#2448b8" opacity="0.75"/><rect x="5" y="27.9" width="28.2" height="1.6" fill="#2448b8" opacity="0.75"/><path d="M12.3 5 L25.4 19 M25.4 5 L12.3 19" stroke="#e41414" stroke-width="2.2"/></svg>
  <div class="frame"></div>
</div>
<div class="strip" style="left:9px;top:0;width:1754px;height:1px"></div>
<div class="strip" style="left:9px;top:985px;width:1754px;height:1px;background:#8c8c8c"></div>
</body></html>
